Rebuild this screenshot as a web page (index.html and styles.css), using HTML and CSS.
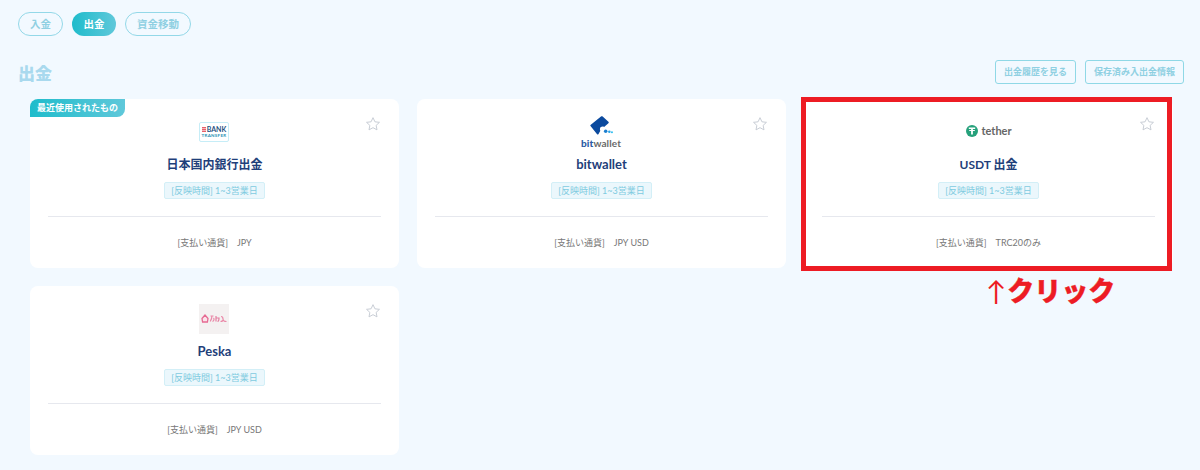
FILE: index.html
```html
<!DOCTYPE html>
<html lang="ja">
<head>
    <meta charset="UTF-8">
    <meta name="viewport" content="width=device-width, initial-scale=1.0">
    <title>出金</title>
    <link rel="stylesheet" href="styles.css">
</head>
<body>
    <div class="tabs">
        <a class="tab">入金</a>
        <a class="tab active">出金</a>
        <a class="tab">資金移動</a>
    </div>

    <div class="page-head">
        <h1>出金</h1>
        <div class="head-btns">
            <a class="head-btn">出金履歴を見る</a>
            <a class="head-btn">保存済み入出金情報</a>
        </div>
    </div>

    <div class="cards">
        <div class="card">
            <span class="recent">最近使用されたもの</span>
            <svg class="star" viewBox="0 0 24 24"><path d="M12 2.5l2.9 6.2 6.8.8-5 4.6 1.3 6.7-6-3.3-6 3.3 1.3-6.7-5-4.6 6.8-.8z"/></svg>
            <div class="logo">
                <div class="bank-logo">
                    <div class="bank-top"><i class="bank-flag"></i><b>BANK</b></div>
                    <b class="bank-sub">TRANSFER</b>
                </div>
            </div>
            <h2>日本国内銀行出金</h2>
            <span class="time">[反映時間] 1~3営業日</span>
            <div class="pay"><span>[支払い通貨]</span><span>JPY</span></div>
        </div>

        <div class="card">
            <svg class="star" viewBox="0 0 24 24"><path d="M12 2.5l2.9 6.2 6.8.8-5 4.6 1.3 6.7-6-3.3-6 3.3 1.3-6.7-5-4.6 6.8-.8z"/></svg>
            <div class="logo">
                <div class="bw-logo">
                    <svg viewBox="0 0 22 18" width="23" height="19">
                        <path d="M.5 8.5L10.5.5c.5-.4 1.100-.4 1.600 0l5.500 4.900c.5.4.5 1 0 1.400L13.500 10.500c-1.500-1-3.800-.2-4 1.800-.1.800.1 1.400.4 1.800L8 17.300c-.4.300-.8.300-1.200 0L.5 9.500c-.3-.3-.3-.7 0-1z" fill="#0b4a9e"/>
                        <circle cx="15" cy="14.5" r="1.700" fill="#1c7fd0"/>
                        <circle cx="18.5" cy="15" r="1.200" fill="#2aa5e8"/>
                        <circle cx="21" cy="15.500" r="1" fill="#35c0f0"/>
                    </svg>
                    <div class="bw-text"><b>bit</b>wallet</div>
                </div>
            </div>
            <h2 class="latin">bitwallet</h2>
            <span class="time">[反映時間] 1~3営業日</span>
            <div class="pay"><span>[支払い通貨]</span><span>JPY USD</span></div>
        </div>

        <div class="card">
            <svg class="star" viewBox="0 0 24 24"><path d="M12 2.5l2.9 6.2 6.8.8-5 4.6 1.3 6.7-6-3.3-6 3.3 1.3-6.7-5-4.6 6.8-.8z"/></svg>
            <div class="logo">
                <div class="tether-logo">
                    <svg viewBox="0 0 12 12" width="12" height="12">
                        <circle cx="6" cy="6" r="6" fill="#26a17b"/>
                        <path d="M2.800 2.600h6.400v1.500H6.900v1h1.900v1H6.900v3.300H5.100V6.100H3.200v-1h1.900v-1H2.800z" fill="#fff"/>
                    </svg>
                    <span>tether</span>
                </div>
            </div>
            <h2>USDT 出金</h2>
            <span class="time">[反映時間] 1~3営業日</span>
            <div class="pay"><span>[支払い通貨]</span><span>TRC20のみ</span></div>
            <div class="callout"></div>
            <div class="click-note"><span class="arrow">↑</span><b>クリック</b></div>
        </div>

        <div class="card">
            <svg class="star" viewBox="0 0 24 24"><path d="M12 2.5l2.9 6.2 6.8.8-5 4.6 1.3 6.7-6-3.3-6 3.3 1.3-6.7-5-4.6 6.8-.8z"/></svg>
            <div class="logo">
                <div class="peska-logo">
                    <svg viewBox="0 0 26 9" width="26" height="9">
                        <path d="M1 4.500L4 1l3 3.500-.6 3.500H1.600z" fill="#fbe3ea" stroke="#e66a93" stroke-width="1.300"/>
                        <path d="M9.500 2h3M11 1.500c0 2-.5 4-1.800 6M12.500 4c1 1 .5 3-1 3.500" fill="none" stroke="#ea88a8" stroke-width="1.200"/>
                        <path d="M15 2v5.500M15 4h3c0 2 0 3.500-1.500 3.500" fill="none" stroke="#e47ea0" stroke-width="1.200"/>
                        <path d="M20 2.500c1.500 0 2 1 2 2.500s1 2.500 3.500 2.500M19.500 7.500c1 0 2-.5 2.500-1" fill="none" stroke="#ea88a8" stroke-width="1.200"/>
                    </svg>
                </div>
            </div>
            <h2 class="latin">Peska</h2>
            <span class="time">[反映時間] 1~3営業日</span>
            <div class="pay"><span>[支払い通貨]</span><span>JPY USD</span></div>
        </div>
    </div>
</body>
</html>
```

FILE: styles.css
```css
* {
    box-sizing: border-box;
}
body {
    margin: 0;
    padding: 12px 16px 0 18px;
    height: 470px;
    overflow: hidden;
    background: #f2f9ff;
    font-family: "Lato", "Noto Sans CJK JP", sans-serif;
}
.tabs {
    display: flex;
    gap: 9px;
}
.tab {
    height: 24px;
    padding: 0 11px;
    line-height: 22px;
    font-size: 10.5px;
    font-weight: 700;
    color: #8fd0e2;
    border: 1px solid #93d8e8;
    border-radius: 12px;
}
.tab.active {
    color: #fff;
    border: none;
    line-height: 24px;
    padding: 0 11.5px;
    background: linear-gradient(90deg, #1fbccb, #5fc8da);
}
.page-head {
    display: flex;
    justify-content: space-between;
    align-items: center;
    height: 26px;
    margin-top: 23px;
}
h1 {
    margin: 0;
    font-size: 17px;
    font-weight: 900;
    color: #a9d9ee;
}
.head-btns {
    display: flex;
    gap: 9px;
}
.head-btn {
    height: 24px;
    padding: 0 8px;
    line-height: 22px;
    font-size: 9px;
    font-weight: 700;
    color: #8fd0e2;
    border: 1px solid #8fd8e6;
    border-radius: 3px;
}
.cards {
    display: grid;
    grid-template-columns: repeat(3, 369px);
    gap: 18px;
    margin-top: 14px;
    margin-left: 12px;
}
.card {
    position: relative;
    height: 169px;
    padding: 0 18px;
    background: #fff;
    border-radius: 8px;
    text-align: center;
}
.recent {
    position: absolute;
    left: 0;
    top: 0;
    width: 95px;
    height: 18px;
    line-height: 18px;
    font-size: 9px;
    font-weight: 700;
    color: #fff;
    background: linear-gradient(90deg, #1fbccb, #5fc8da);
    border-radius: 8px 0 8px 0;
}
.star {
    position: absolute;
    top: 17px;
    right: 18px;
    width: 16px;
    height: 16px;
    fill: none;
    stroke: #c9ced6;
    stroke-width: 1.5;
    stroke-linejoin: round;
}
.logo {
    display: flex;
    justify-content: center;
    align-items: center;
    height: 51px;
    padding-top: 14px;
    padding-right: 1px;
    margin-bottom: 5px;
}
.bank-logo {
    display: flex;
    flex-direction: column;
    justify-content: center;
    align-items: center;
    width: 30px;
    height: 20px;
    background: #fff;
    border: 1px solid #c6edf7;
    border-radius: 2px;
}
.bank-top {
    display: flex;
    align-items: center;
    gap: 1px;
    font-size: 7px;
    color: #1f4f7f;
}
.bank-flag {
    width: 4px;
    height: 5px;
    background: repeating-linear-gradient(180deg, #e8606a 0 1px, #f6b5ba 1px 2px);
}
.bank-sub {
    display: block;
    font-size: 4.5px;
    letter-spacing: 0.3px;
    color: #2b93b5;
}
.bw-logo {
    display: flex;
    flex-direction: column;
    align-items: center;
    margin-top: 2px;
}
.bw-logo svg {
    margin-bottom: 3px;
    margin-left: 2px;
}
.bw-text {
    font-size: 10px;
    line-height: 11px;
    font-weight: 700;
    letter-spacing: 0.1px;
    color: #6a6a6a;
}
.bw-text b {
    color: #2c5ba5;
}
.tether-logo {
    display: flex;
    align-items: center;
    gap: 3px;
    margin-top: -2px;
    margin-left: 2px;
    font-size: 11px;
    font-weight: 700;
    color: #666;
}
.peska-logo {
    display: flex;
    justify-content: center;
    align-items: center;
    width: 30px;
    height: 30px;
    background: #f4f1f1;
}
h2 {
    margin: 0;
    height: 20px;
    line-height: 20px;
    font-size: 12px;
    font-weight: 700;
    color: #1f3f7a;
}
h2.latin {
    line-height: 18px;
    font-size: 13px;
}
.time {
    display: inline-block;
    height: 17px;
    margin-top: 7px;
    padding: 0 6px;
    line-height: 15px;
    font-size: 9px;
    color: #7fcbe0;
    background: #ebf7fc;
    border: 1px solid #d3eff7;
    border-radius: 2px;
}
.pay {
    display: flex;
    justify-content: center;
    gap: 9px;
    height: 52px;
    margin-top: 17px;
    padding-top: 19px;
    line-height: 13px;
    font-size: 9px;
    color: #777;
    border-top: 1px solid #e6e8ee;
}
.callout {
    position: absolute;
    left: -3px;
    right: 1px;
    top: -2px;
    bottom: -3px;
    border: 5px solid #ed1c24;
    pointer-events: none;
}
.click-note {
    position: absolute;
    left: 182px;
    top: 175px;
    display: flex;
    align-items: center;
    white-space: nowrap;
    line-height: 34px;
    font-size: 27px;
    color: #ed1c24;
}
.click-note .arrow {
    font-weight: 400;
    margin-right: 1px;
}
.click-note b {
    font-weight: 900;
    -webkit-text-stroke: 0.4px #ed1c24;
}
```
